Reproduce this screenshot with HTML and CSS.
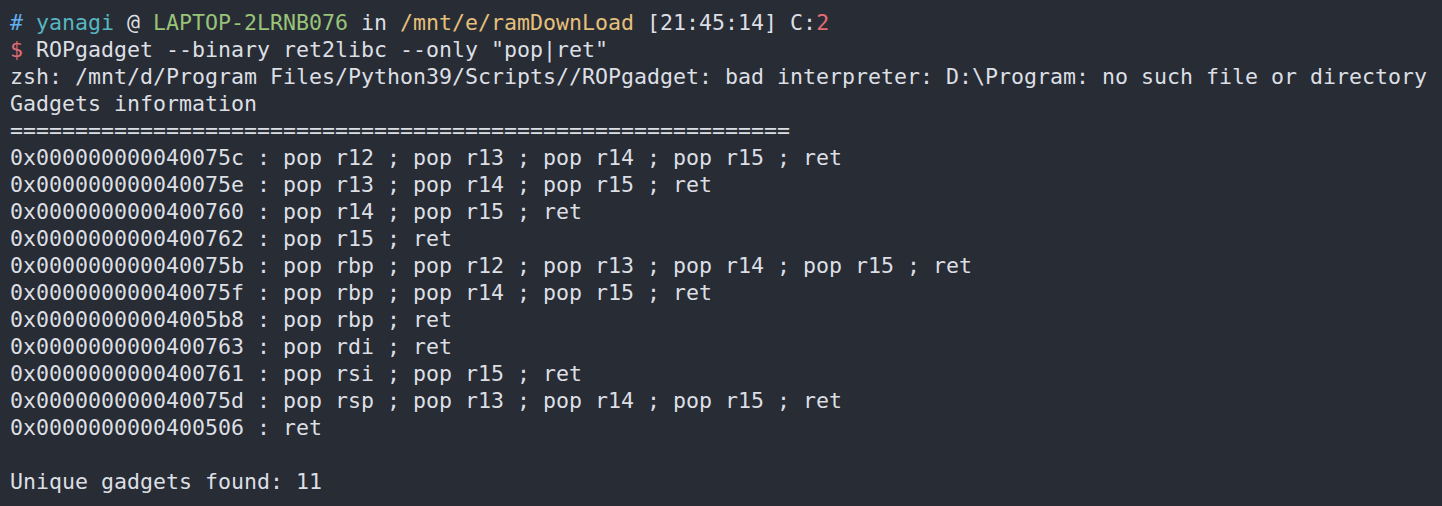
FILE: index.html
```html
<!DOCTYPE html>
<html>
<head>
<meta charset="utf-8">
<link rel="stylesheet" href="styles.css">
</head>
<body>
<div class="term">
<div class="line"><span class="blue">#</span> <span class="cyan">yanagi</span> @ <span class="green">LAPTOP-2LRNB076</span> in <span class="yellow">/mnt/e/ramDownLoad</span> [21:45:14] C:<span class="red">2</span></div>
<div class="line"><span class="red">$</span> ROPgadget --binary ret2libc --only "pop|ret"</div>
<div class="line">zsh: /mnt/d/Program Files/Python39/Scripts//ROPgadget: bad interpreter: D:\Program: no such file or directory</div>
<div class="line">Gadgets information</div>
<div class="line">============================================================</div>
<div class="line">0x000000000040075c : pop r12 ; pop r13 ; pop r14 ; pop r15 ; ret</div>
<div class="line">0x000000000040075e : pop r13 ; pop r14 ; pop r15 ; ret</div>
<div class="line">0x0000000000400760 : pop r14 ; pop r15 ; ret</div>
<div class="line">0x0000000000400762 : pop r15 ; ret</div>
<div class="line">0x000000000040075b : pop rbp ; pop r12 ; pop r13 ; pop r14 ; pop r15 ; ret</div>
<div class="line">0x000000000040075f : pop rbp ; pop r14 ; pop r15 ; ret</div>
<div class="line">0x00000000004005b8 : pop rbp ; ret</div>
<div class="line">0x0000000000400763 : pop rdi ; ret</div>
<div class="line">0x0000000000400761 : pop rsi ; pop r15 ; ret</div>
<div class="line">0x000000000040075d : pop rsp ; pop r13 ; pop r14 ; pop r15 ; ret</div>
<div class="line">0x0000000000400506 : ret</div>
<div class="line"> </div>
<div class="line">Unique gadgets found: 11</div>
</div>
</body>
</html>
```
FILE: styles.css
```css
html, body {
  margin: 0;
  padding: 0;
  background: #282c34;
}
.term {
  height: 506px;
  box-sizing: border-box;
  padding: 9px 0 0 10px;
  font-family: "DejaVu Sans Mono", monospace;
  font-size: 21.6px;
  line-height: 27px;
  color: #dcdfe4;
  overflow: hidden;
}
.line {
  white-space: pre;
  height: 27px;
}
.blue { color: #61afef; }
.cyan { color: #56b6c2; }
.green { color: #98c379; }
.yellow { color: #e5c07b; }
.red { color: #e06c75; }
```
